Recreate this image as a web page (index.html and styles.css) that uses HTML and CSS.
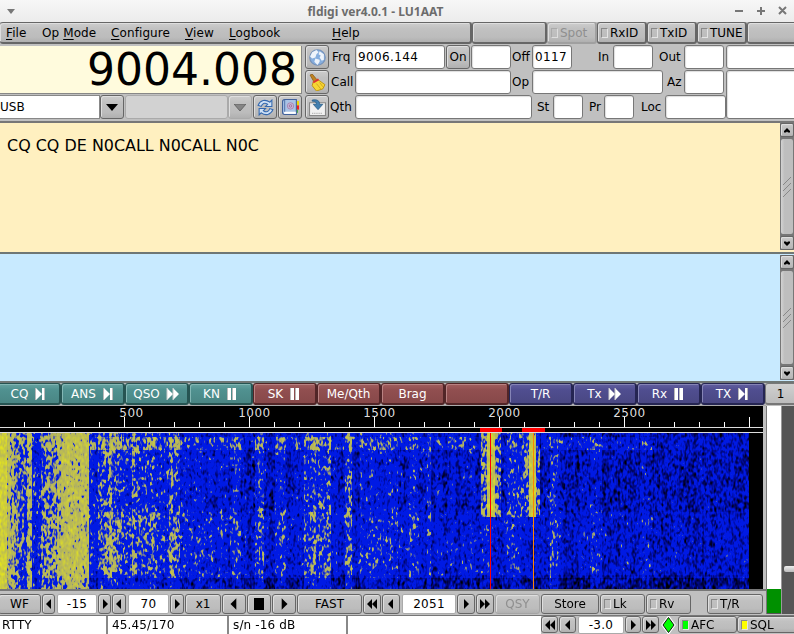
FILE: index.html
```html
<!DOCTYPE html>
<html lang="en">
<head>
<meta charset="utf-8">
<title>fldigi ver4.0.1 - LU1AAT</title>
<link rel="stylesheet" href="styles.css">
</head>
<body>
<svg width="0" height="0" class="defs">
  <symbol id="left" viewBox="0 0 12 12"><path d="M8 1v10L3 6z"/></symbol>
  <symbol id="right" viewBox="0 0 12 12"><path d="M4 1v10l5-5z"/></symbol>
  <symbol id="left2" viewBox="0 0 12 12"><path d="M6 1v10L1 6zM11 1v10L6 6z"/></symbol>
  <symbol id="right2" viewBox="0 0 12 12"><path d="M1 1v10l5-5zM6 1v10l5-5z"/></symbol>
  <symbol id="m-next" viewBox="0 0 12 14"><path d="M2 1v12l6-6zM8 1h2v12H8z" fill="#fff"/><path d="M1.5 1v12M10.5 1v12" stroke="#b9b9b9"/></symbol>
  <symbol id="m-fast" viewBox="0 0 14 14"><path d="M1 1v12l6-6zM7 1v12l6-6z" fill="#fff"/><path d="M1 1v12M7 1v12" stroke="#ccc"/></symbol>
  <symbol id="m-pause" viewBox="0 0 12 14"><path d="M2 1h3v12H2zM7 1h3v12H7z" fill="#fff"/><path d="M1.5 1v12M6.5 1v12" stroke="#b9b9b9"/></symbol>
  <symbol id="up" viewBox="0 0 8 5"><path d="M4 0l3 3v1.500H5L4 3.500 3 4.500H1V3z"/></symbol>
</svg>
<div class="window">
  <header class="titlebar">
    <svg class="wmenu" viewBox="0 0 8 5"><path d="M0 0h8L4 5z"/></svg>
    <h1>fldigi ver4.0.1 - LU1AAT</h1>
    <svg class="wbtns" viewBox="0 0 54 12"><path d="M1 6h8M23 6h8M27 2v8M45 2l7 7M52 2l-7 7"/></svg>
  </header>

  <nav class="menurow">
    <div class="menus up">
      <span><u>F</u>ile</span><span>Op <u>M</u>ode</span><span><u>C</u>onfigure</span><span><u>V</u>iew</span><span><u>L</u>ogbook</span><span><u>H</u>elp</span>
    </div>
    <div class="up"></div>
    <div class="up check off"><i></i>Spot</div>
    <div class="up check"><i></i>RxID</div>
    <div class="up check"><i></i>TxID</div>
    <div class="up check"><i></i>TUNE</div>
    <div class="up"></div>
  </nav>

  <section class="rig">
    <div class="rig-left">
      <div class="freq">9004.008</div>
      <div class="modes">
        <div class="mode">USB</div>
        <div class="btn"><svg class="drop" viewBox="0 0 12 7"><path d="M0 0h12L6 7z"/></svg></div>
        <div class="mode dim"></div>
        <div class="btn dimbtn"><svg class="drop" viewBox="0 0 12 7"><path d="M0 0h12L6 7z" fill="#858585" stroke="#666"/></svg></div>
        <div class="btn"><svg class="ico" viewBox="0 0 16 16"><g fill="#cfe2f7" stroke="#3569b0"><path d="M1 6C3 1 8 0 12 3l2-2v6H8l2-2C7 3 5 4 4 7z"/><path d="M15 10c-2 5-7 6-11 3l-2 2V9h6l-2 2c3 2 5 1 6-2z"/></g></svg></div>
        <div class="btn"><svg class="ico" viewBox="0 0 16 16"><path d="M13 2h3v4h-3z" fill="#edd400"/><path d="M13 6h3v4h-3z" fill="#e22"/><path d="M13 10h2v3h-2z" fill="#4a4"/><path d="M2.500.500h11v14h-11q-2 0-2-2v-10q0-2 2-2z" fill="#a9c3e5" stroke="#41619a"/><path d="M2 12h11v2H2z" fill="#fff"/><path d="M2.500 1v11" stroke="#5577ae"/><circle cx="8" cy="6.500" r="3" fill="#c2bddd" stroke="#a97bab" stroke-width=".8"/><circle cx="8" cy="6.500" r="1.200" fill="none" stroke="#a0628f" stroke-width=".8"/></svg></div>
      </div>
    </div>
    <div class="rig-tools">
      <div class="btn"><svg class="ico" viewBox="0 0 16 16"><circle cx="8" cy="8" r="7.300" fill="#86aede" stroke="#7691b8"/><path d="M3 3l4-2 2 2-2 2-1 3-3 1-2-2zM10 2l4 3v5l-2 1-2-3 1-2-2-1zM6 9l4 1v2l-2 3-3-3z" fill="#eef4fb"/></svg></div>
      <div class="btn"><svg class="ico" viewBox="0 0 16 16"><path d="M1 1l2-1 5 6-3 2z" fill="#c18422" stroke="#875711" stroke-width=".7"/><path d="M8 5l7 5-2 4-6 2-4-5 1-4z" fill="#f7d634" stroke="#b78b05" stroke-width=".8"/><path d="M4 8l5-3" stroke="#d33" stroke-width="1.800"/><path d="M7 9l4 5M10 8l3 4" stroke="#c49a16" stroke-width=".7"/></svg></div>
      <div class="btn"><svg class="ico" viewBox="0 0 16 16"><path d="M.500 3.500h15v12H.500z" fill="#f1f1f1" stroke="#888"/><path d="M3 13.500h10" stroke="#aaa" stroke-dasharray="1 1"/><path d="M3 1c5-1 7 1 7 4h3l-4.500 5L4 5h3c0-2-1-3-4-3z" fill="#4380b0" stroke="#285b85" stroke-width=".7"/></svg></div>
    </div>
    <div class="log">
      <div class="r1"><label>Frq</label><b class="field">9006.144</b><div class="btn">On</div><b class="field"></b><label>Off</label><b class="field">0117</b><label>In</label><b class="field"></b><label>Out</label><b class="field"></b></div>
      <div class="r2"><label>Call</label><b class="field"></b><label>Op</label><b class="field"></b><label>Az</label><b class="field"></b></div>
      <div class="r3"><label>Qth</label><b class="field"></b><label>St</label><b class="field"></b><label>Pr</label><b class="field"></b><label>Loc</label><b class="field"></b></div>
    </div>
    <div class="notes"><b class="field"></b><b class="field"></b></div>
  </section>

  <section class="pane rx">
    <p>CQ CQ DE N0CALL N0CALL N0C</p>
    <div class="scroll"><div class="btn"><svg class="arr"><use href="#up"/></svg></div><div class="thumb"><svg viewBox="0 0 8 20"><path d="M0 8l8-8M0 14l8-8M0 20l8-8"/></svg></div><div class="btn"><svg class="arr flip"><use href="#up"/></svg></div></div>
  </section>
  <section class="pane tx">
    <p></p>
    <div class="scroll"><div class="btn"><svg class="arr"><use href="#up"/></svg></div><div class="thumb"><svg viewBox="0 0 8 20"><path d="M0 8l8-8M0 14l8-8M0 20l8-8"/></svg></div><div class="btn"><svg class="arr flip"><use href="#up"/></svg></div></div>
  </section>

  <div class="macros">
    <div class="teal first">CQ<svg><use href="#m-next"/></svg></div>
    <div class="teal">ANS<svg><use href="#m-next"/></svg></div>
    <div class="teal">QSO<svg class="w"><use href="#m-fast"/></svg></div>
    <div class="teal">KN<svg><use href="#m-pause"/></svg></div>
    <div class="brown">SK<svg><use href="#m-pause"/></svg></div>
    <div class="brown">Me/Qth</div>
    <div class="brown">Brag</div>
    <div class="brown"></div>
    <div class="violet">T/R</div>
    <div class="violet">Tx<svg class="w"><use href="#m-fast"/></svg></div>
    <div class="violet">Rx<svg><use href="#m-pause"/></svg></div>
    <div class="violet">TX<svg><use href="#m-next"/></svg></div>
    <div class="page">1</div>
  </div>

  <main class="lower">
    <div class="wfcol">
      <div class="scale">
        <div class="nums"><span>500</span><span>1000</span><span>1500</span><span>2000</span><span>2500</span></div>
        <svg class="ticks" width="763" height="11"></svg>
      </div>
      <div class="marks"><i></i><i></i></div>
      <canvas id="wf" width="763" height="156"></canvas>
      <div class="controls">
        <div class="btn">WF</div>
        <div class="btn"><svg><use href="#left"/></svg></div><b class="val">-15</b><div class="btn"><svg><use href="#right"/></svg></div>
        <div class="btn"><svg><use href="#left"/></svg></div><b class="val">70</b><div class="btn"><svg><use href="#right"/></svg></div>
        <div class="btn">x1</div>
        <div class="btn"><svg class="big"><use href="#left"/></svg></div><div class="btn"><i class="stop"></i></div><div class="btn"><svg class="big"><use href="#right"/></svg></div>
        <div class="btn">FAST</div>
        <div class="btn"><svg><use href="#left2"/></svg></div><div class="btn"><svg><use href="#left"/></svg></div><b class="val">2051</b><div class="btn"><svg><use href="#right"/></svg></div><div class="btn"><svg><use href="#right2"/></svg></div>
        <div class="btn gray">QSY</div><div class="btn">Store</div>
        <div class="btn check"><i></i>Lk</div><div class="btn check"><i></i>Rv</div><div class="btn check last"><i></i>T/R</div>
      </div>
    </div>
    <div class="meter"><i></i></div>
    <div class="slider"><i></i></div>
  </main>

  <footer class="status">
    <div class="cell">RTTY</div><div class="cell">45.45/170</div><div class="cell">s/n -16 dB</div><div class="cell"></div>
    <div class="btn"><svg><use href="#left2"/></svg></div><div class="btn"><svg><use href="#left"/></svg></div><b class="val">-3.0</b><div class="btn"><svg><use href="#right"/></svg></div><div class="btn"><svg><use href="#right2"/></svg></div>
    <svg class="diamond" viewBox="0 0 14 18"><path d="M7 1.500l5.500 7.500L7 16.500 1.500 9z" fill="#0f0" stroke="#fff" stroke-width="3"/><path d="M7 1.500l5.500 7.500L7 16.500 1.500 9z" fill="#0f0" stroke="#111"/></svg>
    <div class="btn check green"><i></i>AFC</div><div class="btn check yellow"><i></i>SQL</div>
  </footer>
</div>
<script src="waterfall.js"></script>
</body>
</html>
```
FILE: styles.css
```css
* { box-sizing: border-box; }
body { margin: 0; width: 794px; height: 634px; overflow: hidden; background: #c0c0c0; font: 12px "DejaVu Sans", sans-serif; color: #000; }
.defs { position: absolute; }
b { font-weight: normal; }
svg { display: block; flex: none; }
.window { width: 794px; height: 634px; overflow: hidden; display: flex; flex-direction: column; }
.window > * { flex: none; }

.titlebar { height: 22px; display: grid; grid-template-columns: 100px 551px 143px; align-items: center; background: linear-gradient(#f7f7f7, #ececec); }
.titlebar h1 { margin: 0; text-align: center; font: bold 12px "Noto Sans", sans-serif; color: #6c6c6c; white-space: nowrap; }
.wmenu { width: 8px; height: 5px; margin-left: 7px; fill: #777; }
.wbtns { width: 54px; height: 12px; margin-left: 83px; stroke: #777; stroke-width: 2; fill: none; }

.up, .btn { background: linear-gradient(#cdcdcd, #c1c1c1 30%, #bcbcbc 75%, #b0b0b0); border: 1px solid #666; border-radius: 3px; box-shadow: inset 1px 1px 0 #dedede; display: flex; align-items: center; justify-content: center; white-space: nowrap; }
.menurow { height: 22px; display: grid; grid-template-columns: 472px 75px 50px 50px 50px 50px 60px; background: #c0c0c0; }
.menurow .up { border-width: 1px 2px 2px 1px; border-color: #666; }
.menurow .menus { border-left: 0; justify-content: flex-start; padding-left: 6px; }
.menus span { letter-spacing: .1px; }
.menus span:nth-child(1) { width: 36px; }
.menus span:nth-child(2) { width: 69px; }
.menus span:nth-child(3) { width: 74px; }
.menus span:nth-child(4) { width: 44px; }
.menus span:nth-child(5) { width: 103px; }
.menus u { text-underline-offset: 2px; }
.check { justify-content: flex-start; gap: 2px; padding-left: 3px; }
.check i { width: 7px; height: 10px; flex: none; border: 1px solid #888; border-right-color: #e4e4e4; border-bottom-color: #e4e4e4; }
.menurow .off { color: #8f8f8f; border-color: #a0a0a0; }
.off i { border-color: #aaa #ddd #ddd #aaa; }

.rig { height: 79px; padding-top: 1px; display: grid; grid-template-columns: 305px 24px 397px 68px; border-bottom: 2px solid #777; }
.rig-left { display: grid; grid-template-rows: 49px 24px; row-gap: 1px; }
.freq { width: 302px; height: 48px; margin-top: 1px; padding-right: 4px; background: #fffbdd; border: solid #888; border-width: 0 1px 1px 0; font-size: 44px; line-height: 48px; text-align: right; }
.modes { display: grid; grid-template-columns: 100px 25px 103px 25px 25px 25px; }
.modes .btn { margin-right: 1px; }
.mode { background: #fff; border: 1px solid #888; border-left: 0; line-height: 22px; }
.dim { background: #d2d2d2; border: 1px solid #aaa; border-radius: 3px; }
.dimbtn { border-color: #aaa; }
.drop { width: 12px; height: 7px; }
.ico { width: 17px; height: 17px; }
.rig-tools { display: grid; grid-template-rows: 24px 24px 24px; row-gap: 1px; }
.log { display: grid; grid-template-rows: 24px 24px 24px; row-gap: 1px; }
.log > div { display: grid; }
.r1 { grid-template-columns: 26px 91px 25px 41px 20px 66px 15px 46px 25px 41px; }
.r2 { grid-template-columns: 26px 157px 20px 135px 17px 41px; }
.r3 { grid-template-columns: 26px 182px 16px 36px 15px 37px 24px 61px; }
.log label { line-height: 24px; white-space: nowrap; padding-left: 3px; }
.log .r2 label:first-child { padding-left: 2px; }
.log .r3 label:first-child { padding-left: 1px; }
.log .r1 label:nth-of-type(n+2), .log .r2 label:nth-of-type(n+2) { padding-left: 0; }
.log .r3 label:nth-of-type(n+2) { padding-left: 0; }
.field { height: 24px; background: #fff; border: 1px solid #777; border-radius: 3px; box-shadow: inset 1px 1px 1px #ddd; line-height: 22px; padding-left: 2px; letter-spacing: .37px; }
.r1 .field, .r2 .field { margin-right: 1px; }
.r1 .field:nth-of-type(3) { width: 40px; }
.r1 .field:nth-of-type(4) { width: 40px; }
.r2 .field:nth-of-type(2) { width: 131px; }
.r3 .field:nth-of-type(1) { width: 177px; }
.r3 .field:nth-of-type(2), .r3 .field:nth-of-type(3) { width: 30px; }
.r1 .btn { margin-right: 1px; }
.notes { display: grid; grid-template-rows: 24px 49px; row-gap: 1px; }
.notes .field { width: 74px; height: auto; }

.pane { display: grid; grid-template-columns: 780px 14px; border-bottom: 2px solid #6f7775; }
.pane p { margin: 0; padding: 13px 7px; font-size: 15.950px; line-height: 19px; }
.rx { height: 131px; background: #fff0c0; }
.tx { height: 129px; background: #c8eaff; }
.scroll { display: grid; grid-template-rows: 14px 1fr 14px; row-gap: 1px; background: #777; margin-bottom: 1px; }
.rx .scroll { margin-bottom: 2px; }
.tx .scroll { margin-top: 1px; }
.scroll .btn { border-radius: 2px; }
.arr { width: 8px; height: 5px; }
.flip { transform: rotate(180deg); }
.thumb { background: linear-gradient(90deg, #d2d2d2, #bebebe 30%); border: 1px solid #777; border-radius: 3px; display: flex; align-items: center; justify-content: center; }
.thumb svg { width: 8px; height: 20px; fill: none; stroke: #888; }

.macros { height: 22px; display: grid; grid-template-columns: 61px repeat(11, 64px) 32px; }
.macros div { display: flex; align-items: center; justify-content: center; gap: 6px; color: #fff; border: 1px solid; border-right-width: 2px; border-bottom-width: 2px; border-radius: 3px; }
.macros .first { margin-left: -3px; }
.macros svg { width: 12px; height: 14px; }
.macros svg.w { width: 14px; }
.macros .teal { background: linear-gradient(#66a3a1, #509190 30%, #498684); border-color: #265452; box-shadow: inset 1px 1px #83b7b5; }
.macros .brown { background: linear-gradient(#a25f5f, #914f50 30%, #874849); border-color: #512527; box-shadow: inset 1px 1px #b98282; }
.macros .violet { background: linear-gradient(#625fa0, #504e90 30%, #494783); border-color: #252552; box-shadow: inset 1px 1px #8584b6; }
.macros .page { background: linear-gradient(#d0d0d0, #bcbcbc); color: #000; border-color: #777; }

.lower { height: 210px; display: grid; grid-template-columns: 766px 15px 13px; }
.wfcol { display: grid; grid-template-rows: 22px 5px 156px 26px; background: #c0c0c0; border-top: 1px solid #aaa; }
.scale { width: 763px; background: #000; border-bottom: 1px solid #ddd; display: grid; grid-template-rows: 11px 10px; }
.nums { display: grid; grid-template-columns: repeat(5, 125px); padding-left: 67px; color: #ddd; font-size: 12px; letter-spacing: .5px; line-height: 14px; }
.nums span { text-align: center; }
.nums span:first-child { padding-left: 4px; }
.ticks { stroke: #fff; }
.marks { width: 763px; background: #000; border-bottom: 1px solid #ddd; display: flex; padding-left: 480px; gap: 20px; }
.marks i { width: 22px; height: 4px; background: #f00; }
.marks i + i { width: 23px; }
#wf { display: block; background: #000; }
.controls { border-top: 2px solid #777; padding-top: 3px; display: grid; grid-template-rows: 20px; grid-template-columns: 42px 14px 42px 14px 15px 43px 15px 37px 25px 25px 25px 66px 19px 19px 56px 19px 19px 46px 59px 46px 46px 72px; }
.controls .btn { margin-right: 1px; }
.controls .btn:first-child { margin-left: -2px; }
.val { background: #fff; border: 1px solid #aaa; border-radius: 2px; margin: 0 1px; text-align: center; line-height: 18px; letter-spacing: .3px; }
.controls svg, .status .btn svg { width: 12px; height: 12px; }
.controls svg.big { width: 14px; height: 14px; }
.controls .last { margin-left: 15px; }
.stop { width: 10px; height: 12px; background: #000; }
.controls .gray { color: #8f8f8f; border-color: #a4a4a4; }
.meter { background: #fff; border-left: 1px solid #777; display: flex; align-items: flex-end; margin: 1px 0; }
.meter i { width: 100%; height: 25px; background: #009000; border-bottom: 1px solid #555; }
.slider { background: #555; border-left: 1px solid #999; margin: 1px 0; padding: 160px 0 0 2px; }
.slider i { display: block; width: 12px; height: 6px; background: linear-gradient(#eee, #bbb); border-radius: 2px; }

.status { height: 19px; display: grid; grid-template-columns: 108px 121px 119px 193px 18px 18px 48px 17px 18px 18px 59px 60px; border-top: 1px solid #777; }
.cell { background: #fff; border-right: 2px solid #888; padding-left: 3px; line-height: 18px; letter-spacing: .15px; }
.cell:first-child { padding-left: 2px; }
.cell:nth-child(n+2) { padding-left: 4px; }
.status .cell:nth-child(4) { border-right: 0; }
.status .btn { margin: 0 1px 1px 0; }
.status .val { line-height: 16px; }
.status .diamond { width: 15px; height: 18px; margin-left: 1px; }
.status .check { margin: 0 0 1px; }
.status .green i { background: #0f0; }
.status .yellow i { background: #ff0; }
```
FILE: waterfall.js
```js
// Frequency ticks: one every 25px, longer on each 500 Hz
const ticks = document.querySelector('.ticks');
let d = '';
for (let i = 1; i <= 30; i++) {
  const x = i * 25 - .5;
  d += `M${x} ${i % 5 && i < 30 ? 5 : 0}V10`;
}
ticks.innerHTML = `<path d="${d}"/>`;

// Signal strength by column: [from, to, level]
const bands = [
  [0, 7, 1.05], [7, 14, .55], [14, 20, .4], [20, 27, .25], [27, 32, .6], [32, 41, .22],
  [41, 57, .4], [57, 89, .64], [89, 98, .13], [98, 109, .27], [109, 122, .36], [122, 132, .2],
  [132, 155, .34], [155, 169, .2], [169, 180, .36], [180, 205, .12], [205, 222, .12],
  [230, 241, .19], [255, 264, .26], [275, 286, .23], [304, 318, .26], [318, 331, .29],
  [345, 352, .3], [360, 398, .15], [409, 419, .21], [427, 431, .26], [480, 485, .14], [507, 522, .1],
  [550, 558, .25], [590, 602, .12], [640, 653, .08]
];
const W = 763, H = 156;
let seed = 7331;
const rnd = () => (seed = (seed * 1664525 + 1013904223) >>> 0) / 4294967296;
const level = new Float32Array(W);
let streak = 0;
for (let x = 0; x < W; x++) {
  let v = x < 190 ? .1 : x < 560 ? .02 : -.06;
  for (const [a, b, l] of bands) if (x >= a && x < b) v = l;
  streak = streak * .65 + (rnd() - .5) * .14;
  level[x] = v + streak;
}
const ctx = document.getElementById('wf').getContext('2d');
const img = ctx.createImageData(W, H);

// Grain stretched along the time axis
const white = new Float32Array(W * (H + 6));
for (let i = 0; i < white.length; i++) white[i] = (rnd() + rnd() + rnd() - 1.5) * 2;
const kv = [.25, .75, 1, .75, .25], kh = [.35, 1, .35];
const grain = (x, y) => {
  let s = 0;
  for (let j = 0; j < 5; j++) for (let i = 0; i < 3; i++) {
    const cx = Math.max(0, Math.min(W - 1, x + i - 1));
    s += white[(y + j) * W + cx] * kv[j] * kh[i];
  }
  return s / 1.72;
};
const row = (x, y) => {
  if (y < 4) return -.03;
  if (y < 17) return x < 480 || x > 540 && x < 655 ? .16 : .03;
  if (y > 144) return -.2;
  if (y > 78 && y < 142) return .04;
  return x > 89 ? -.04 : 0;
};
for (let y = 0; y < H; y++) for (let x = 0; x < W; x++) {
  let l = level[x] + row(x, y) * (x < 90 ? .4 : 1);
  if (y < 84) {
    if (x >= 487 && x < 495) l = .85;
    else if (x >= 529 && x < 536) l = .85;
    else if (x >= 481 && x < 501) l = .4;
    else if (x >= 507 && x < 525) l = .27;
    else if (x >= 525 && x < 540) l = .36;
  }
  const v = l + grain(x, y) * .155;
  let r, g, b;
  if (v < .31) {
    const t = Math.max(0, Math.min(1, (v + .58) / .62));
    r = 0; g = 26 * t * t; b = 228 * t;
  } else if (v < .5) {
    const t = (v - .31) / .19;
    r = 172 * t; g = 26 + 146 * t; b = 228 - 126 * t;
  } else {
    const t = Math.min(1, (v - .5) / .8);
    r = 176 + 50 * t; g = 176 + 50 * t; b = 98 - 66 * t;
  }
  if (x >= 749) r = g = b = 0;
  img.data.set([r, g, b, 255], (y * W + x) * 4);
}
ctx.putImageData(img, 0, 0);
ctx.fillStyle = '#f00';
ctx.fillRect(490, 0, 1, H);
ctx.fillStyle = '#ff8500';
ctx.fillRect(533, 0, 1, H);
```
